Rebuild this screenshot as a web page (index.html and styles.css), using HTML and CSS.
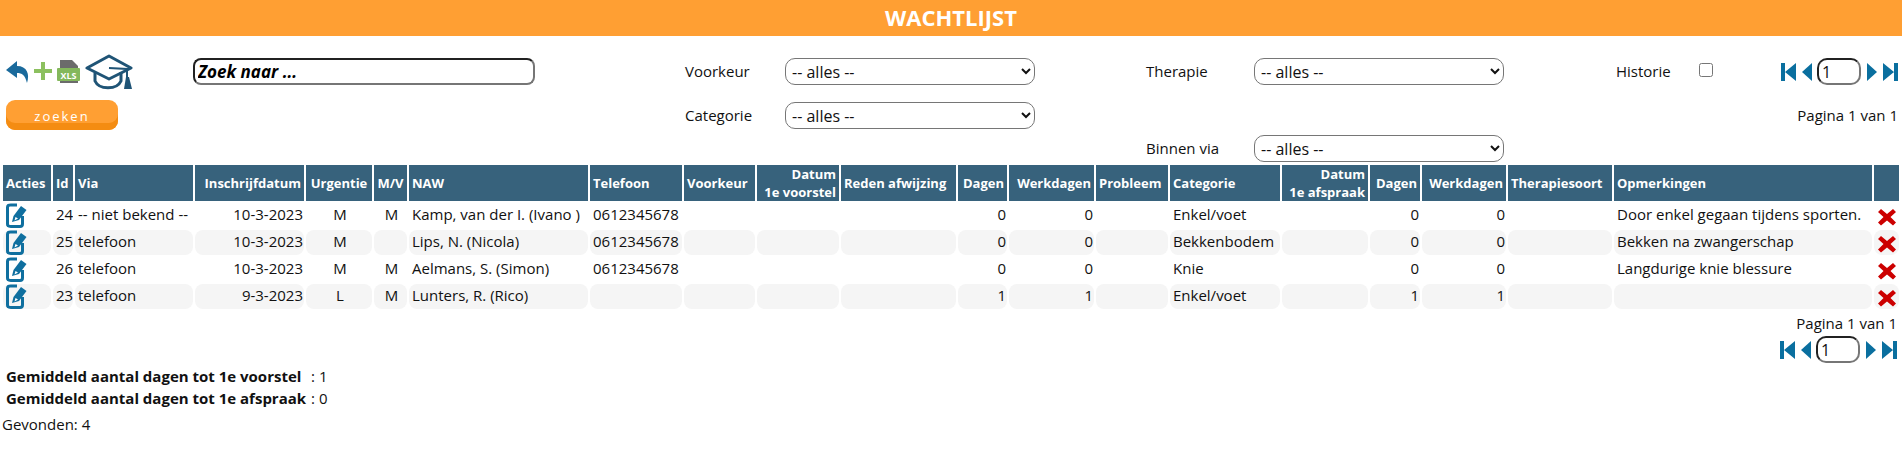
FILE: index.html
```html
<!DOCTYPE html>
<html lang="nl">
<head>
    <meta charset="UTF-8">
    <meta name="viewport" content="width=device-width, initial-scale=1.0">
    <title>Wachtlijst</title>
    <link rel="stylesheet" href="styles.css">
</head>
<body>
    <svg class="sprites" width="0" height="0">
        <symbol id="edit" viewBox="0 0 22 25">
            <path d="M11 2H4Q1.500 2 1.500 4.500V21Q1.500 23.500 4 23.500H14Q16.500 23.500 16.500 21V13" fill="none" stroke="#0f6f9f" stroke-width="3"/>
            <path d="M6 19L7.500 13L15 3L20.500 7L13 17Z" fill="#0f6f9f"/>
            <path d="M8.500 17.500L9.500 14L12 15.500Z" fill="#fff"/>
        </symbol>
        <symbol id="del" viewBox="0 0 18 18">
            <path d="M3 1L9 6L15 1L18 4L12.500 9L18 14.500L15 17.500L9 12.500L3 17.500L0 14.500L5.500 9L0 4Z" fill="#cc0000"/>
        </symbol>
        <symbol id="first" viewBox="0 0 15 18">
            <path d="M0 0H4V18H0ZM15 0V18L4 9Z" fill="#0a6f9f"/>
        </symbol>
        <symbol id="prev" viewBox="0 0 10 18">
            <path d="M10 0V18L0 9Z" fill="#0a6f9f"/>
        </symbol>
        <symbol id="next" viewBox="0 0 10 18">
            <path d="M0 0V18L10 9Z" fill="#0a6f9f"/>
        </symbol>
        <symbol id="last" viewBox="0 0 15 18">
            <path d="M11 0H15V18H11ZM0 0V18L11 9Z" fill="#0a6f9f"/>
        </symbol>
    </svg>

    <h1 class="title">WACHTLIJST</h1>

    <form class="filters">
        <div class="tools">
            <svg class="tool-back" viewBox="0 0 24 24"><path d="M11 1L0 10L11 18V13C16 13 19 15 21 23C24 14 21 6 11 6Z" fill="#1a6a9c"/></svg>
            <svg class="tool-add" viewBox="0 0 18 18"><path d="M7 0H11V7H18V11H11V18H7V11H0V7H7Z" fill="#8cc05f"/></svg>
            <svg class="tool-xls" viewBox="0 0 23 23">
                <path d="M3 0H15L21 6V10H3Z" fill="#6b6b6b"/>
                <rect x="0" y="8" width="23" height="13" rx="1" fill="#84b85c"/>
                <path d="M3 21H21V23H3Z" fill="#6b6b6b"/>
                <text x="11.500" y="18.500" class="xls-text">XLS</text>
            </svg>
            <svg class="tool-hat" viewBox="0 0 48 36">
                <path d="M2 14L24 2L46 14L24 25Z" fill="none" stroke="#1f5476" stroke-width="3" stroke-linejoin="round"/>
                <path d="M10 19V27C14 36 32 36 36 27V18" fill="none" stroke="#1f5476" stroke-width="3"/>
                <path d="M24 14L42 15V24" fill="none" stroke="#1f5476" stroke-width="2"/>
                <path d="M41 23H44L47 35H39Z" fill="#1f5476"/>
            </svg>
        </div>
        <input class="search" type="text" placeholder="Zoek naar ...">
        <label class="lbl-a">Voorkeur</label>
        <select class="sel-a"><option>-- alles --</option></select>
        <label class="lbl-b">Therapie</label>
        <select class="sel-b"><option>-- alles --</option></select>
        <label class="lbl-c">Historie</label>
        <input class="check" type="checkbox">
        <div class="pager pager-top">
            <svg class="pg-wide"><use href="#first"/></svg>
            <svg class="pg-small"><use href="#prev"/></svg>
            <input class="pg-input" type="text" value="1">
            <svg class="pg-small"><use href="#next"/></svg>
            <svg class="pg-wide"><use href="#last"/></svg>
        </div>

        <button class="btn-search" type="button">zoeken</button>
        <label class="lbl-a">Categorie</label>
        <select class="sel-a"><option>-- alles --</option></select>
        <div class="page-info page-info-top">Pagina 1 van 1</div>

        <label class="lbl-b">Binnen via</label>
        <select class="sel-b"><option>-- alles --</option></select>
    </form>

    <table class="list">
        <colgroup>
            <col><col><col><col><col><col><col><col><col><col><col>
            <col><col><col><col><col><col><col><col><col><col>
        </colgroup>
        <thead>
            <tr>
                <th>Acties</th>
                <th>Id</th>
                <th>Via</th>
                <th class="r">Inschrijfdatum</th>
                <th class="c">Urgentie</th>
                <th class="c">M/V</th>
                <th>NAW</th>
                <th>Telefoon</th>
                <th>Voorkeur</th>
                <th class="r">Datum<br>1e voorstel</th>
                <th>Reden afwijzing</th>
                <th class="r">Dagen</th>
                <th class="r">Werkdagen</th>
                <th>Probleem</th>
                <th>Categorie</th>
                <th class="r">Datum<br>1e afspraak</th>
                <th class="r">Dagen</th>
                <th class="r">Werkdagen</th>
                <th>Therapiesoort</th>
                <th>Opmerkingen</th>
                <th></th>
            </tr>
        </thead>
        <tbody>
            <tr>
                <td class="icon"><svg class="ic-edit"><use href="#edit"/></svg></td>
                <td class="r">24</td>
                <td>-- niet bekend --</td>
                <td class="r">10-3-2023</td>
                <td class="c">M</td>
                <td class="c">M</td>
                <td>Kamp, van der I. (Ivano )</td>
                <td>0612345678</td>
                <td></td>
                <td></td>
                <td></td>
                <td class="r">0</td>
                <td class="r">0</td>
                <td></td>
                <td>Enkel/voet</td>
                <td></td>
                <td class="r">0</td>
                <td class="r">0</td>
                <td></td>
                <td>Door enkel gegaan tijdens sporten.</td>
                <td class="icon"><svg class="ic-del"><use href="#del"/></svg></td>
            </tr>
            <tr>
                <td class="icon"><svg class="ic-edit"><use href="#edit"/></svg></td>
                <td class="r">25</td>
                <td>telefoon</td>
                <td class="r">10-3-2023</td>
                <td class="c">M</td>
                <td class="c"></td>
                <td>Lips, N. (Nicola)</td>
                <td>0612345678</td>
                <td></td>
                <td></td>
                <td></td>
                <td class="r">0</td>
                <td class="r">0</td>
                <td></td>
                <td>Bekkenbodem</td>
                <td></td>
                <td class="r">0</td>
                <td class="r">0</td>
                <td></td>
                <td>Bekken na zwangerschap</td>
                <td class="icon"><svg class="ic-del"><use href="#del"/></svg></td>
            </tr>
            <tr>
                <td class="icon"><svg class="ic-edit"><use href="#edit"/></svg></td>
                <td class="r">26</td>
                <td>telefoon</td>
                <td class="r">10-3-2023</td>
                <td class="c">M</td>
                <td class="c">M</td>
                <td>Aelmans, S. (Simon)</td>
                <td>0612345678</td>
                <td></td>
                <td></td>
                <td></td>
                <td class="r">0</td>
                <td class="r">0</td>
                <td></td>
                <td>Knie</td>
                <td></td>
                <td class="r">0</td>
                <td class="r">0</td>
                <td></td>
                <td>Langdurige knie blessure</td>
                <td class="icon"><svg class="ic-del"><use href="#del"/></svg></td>
            </tr>
            <tr>
                <td class="icon"><svg class="ic-edit"><use href="#edit"/></svg></td>
                <td class="r">23</td>
                <td>telefoon</td>
                <td class="r">9-3-2023</td>
                <td class="c">L</td>
                <td class="c">M</td>
                <td>Lunters, R. (Rico)</td>
                <td></td>
                <td></td>
                <td></td>
                <td></td>
                <td class="r">1</td>
                <td class="r">1</td>
                <td></td>
                <td>Enkel/voet</td>
                <td></td>
                <td class="r">1</td>
                <td class="r">1</td>
                <td></td>
                <td></td>
                <td class="icon"><svg class="ic-del"><use href="#del"/></svg></td>
            </tr>
        </tbody>
    </table>

    <div class="page-info page-info-bottom">Pagina 1 van 1</div>
    <div class="pager pager-bottom">
        <svg class="pg-wide"><use href="#first"/></svg>
        <svg class="pg-small"><use href="#prev"/></svg>
        <input class="pg-input" type="text" value="1">
        <svg class="pg-small"><use href="#next"/></svg>
        <svg class="pg-wide"><use href="#last"/></svg>
    </div>

    <div class="summary">
        <strong>Gemiddeld aantal dagen tot 1e voorstel</strong><span>: 1</span>
        <strong>Gemiddeld aantal dagen tot 1e afspraak</strong><span>: 0</span>
    </div>
    <div class="found">Gevonden: 4</div>
</body>
</html>
```

FILE: styles.css
```css
/* Algemeen */
body {
    margin: 0;
    font-family: "Open Sans", sans-serif;
    font-size: 15px;
    color: #111;
    background: #fff;
}
.sprites {
    display: block;
    height: 0;
}
.title {
    margin: 0;
    height: 36px;
    line-height: 34px;
    background: #ff9f33;
    color: #fff;
    font-size: 22px;
    font-weight: 700;
    text-align: center;
}

/* Zoekfilters */
.filters {
    display: grid;
    grid-template-columns: 193px 342px 150px 100px 250px 111px 108px 250px 112px 83px 82px 1fr;
    grid-template-rows: 44px 33px 27px;
    align-items: start;
    margin: 22px 5px 1px 0;
}
.filters label {
    line-height: 27px;
}
.lbl-a { grid-column: 4; }
.sel-a { grid-column: 5; }
.lbl-b { grid-column: 7; }
.sel-b { grid-column: 8; }
.lbl-c { grid-column: 10; }
.filters select,
.filters .search {
    box-sizing: border-box;
    height: 27px;
}
.filters select {
    width: 250px;
    padding: 0 2px;
    border: 1px solid #767676;
    border-radius: 10px;
    background: #fff;
    color: #111;
    font-family: "Open Sans", sans-serif;
    font-size: 16px;
}
.tools {
    display: flex;
    align-items: flex-start;
    margin: -4px 0 0 6px;
}
.tool-back {
    width: 24px;
    height: 24px;
    margin-top: 6px;
}
.tool-add {
    width: 18px;
    height: 18px;
    margin: 8px 0 0 4px;
}
.tool-xls {
    width: 23px;
    height: 23px;
    margin: 6px 0 0 5px;
}
.xls-text {
    fill: #fff;
    font-family: "Open Sans", sans-serif;
    font-size: 9px;
    font-weight: 700;
    text-anchor: middle;
}
.tool-hat {
    width: 48px;
    height: 36px;
    margin-left: 5px;
}
.search {
    width: 342px;
    padding: 0 3px;
    border: 2px inset #767676;
    border-radius: 8px;
    font-family: "Open Sans", sans-serif;
    font-size: 17px;
    font-style: italic;
    font-weight: 700;
}
.search::placeholder {
    color: #000;
    opacity: 1;
}
.check {
    width: 14px;
    height: 14px;
    margin: 5px 0 0;
}
.btn-search {
    grid-column: 1;
    width: 112px;
    height: 30px;
    margin: -2px 0 0 6px;
    padding: 2px 0 0;
    border: 0;
    border-radius: 9px;
    background: #ff9f33;
    box-shadow: inset 0 -7px 0 #f48c12;
    color: #fff;
    font-family: "Open Sans", sans-serif;
    font-size: 13px;
    letter-spacing: 2px;
}

/* Paginering */
.pager {
    display: flex;
    align-items: center;
    justify-content: flex-end;
    margin-right: 5px;
}
.pager-top {
    margin-right: 0;
    height: 27px;
}
.pager-bottom {
    height: 27px;
    margin-top: 3px;
}
.pg-wide {
    width: 15px;
    height: 18px;
}
.pg-small {
    width: 10px;
    height: 18px;
}
.pg-wide + .pg-small {
    margin-left: 6px;
}
.pg-small + .pg-wide {
    margin-left: 6px;
}
.pg-input {
    box-sizing: border-box;
    width: 44px;
    height: 27px;
    margin: 0 6px 0 5px;
    padding: 0 3px;
    border: 2px inset #767676;
    border-radius: 10px;
    color: #111;
    font-family: "Open Sans", sans-serif;
    font-size: 16px;
}
.page-info {
    text-align: right;
}
.page-info-top {
    grid-column: 11 / 13;
    line-height: 27px;
}
.page-info-bottom {
    margin: 2px 5px 0 0;
    line-height: 20px;
}

/* Wachtlijst tabel */
.list {
    table-layout: fixed;
    width: 1898px;
    margin-left: 1px;
    border-collapse: separate;
    border-spacing: 2px;
}
.list col:nth-child(1) { width: 48px; }
.list col:nth-child(2) { width: 20px; }
.list col:nth-child(3) { width: 118px; }
.list col:nth-child(4) { width: 109px; }
.list col:nth-child(5) { width: 66px; }
.list col:nth-child(6) { width: 33px; }
.list col:nth-child(7) { width: 179px; }
.list col:nth-child(8) { width: 92px; }
.list col:nth-child(9) { width: 71px; }
.list col:nth-child(10) { width: 82px; }
.list col:nth-child(11) { width: 115px; }
.list col:nth-child(12) { width: 49px; }
.list col:nth-child(13) { width: 85px; }
.list col:nth-child(14) { width: 72px; }
.list col:nth-child(15) { width: 110px; }
.list col:nth-child(16) { width: 86px; }
.list col:nth-child(17) { width: 50px; }
.list col:nth-child(18) { width: 84px; }
.list col:nth-child(19) { width: 104px; }
.list col:nth-child(20) { width: 258px; }
.list col:nth-child(21) { width: 25px; }
.list th {
    height: 36px;
    padding: 0 3px;
    background: #37627c;
    color: #fff;
    font-size: 13px;
    font-weight: 700;
    line-height: 18px;
    text-align: left;
    white-space: nowrap;
}
.list td {
    box-sizing: border-box;
    height: 25px;
    padding: 0 1px 4px 3px;
    border-radius: 8px;
    line-height: 20px;
    white-space: nowrap;
    overflow: hidden;
}
.list tbody tr:nth-child(even) td {
    background: #f5f5f5;
}
.list th.r,
.list td.r {
    text-align: right;
}
.list th.c,
.list td.c {
    text-align: center;
}
.list td.icon {
    padding: 0;
    line-height: 0;
}
.ic-edit {
    width: 22px;
    height: 25px;
    margin-left: 3px;
}
.ic-del {
    width: 18px;
    height: 18px;
    margin: 3px 0 0 4px;
}

/* Samenvatting */
.summary {
    display: grid;
    grid-template-columns: max-content max-content;
    column-gap: 5px;
    margin: 2px 0 0 6px;
    line-height: 22px;
}
.found {
    margin: 4px 0 0 2px;
    line-height: 22px;
}
```
